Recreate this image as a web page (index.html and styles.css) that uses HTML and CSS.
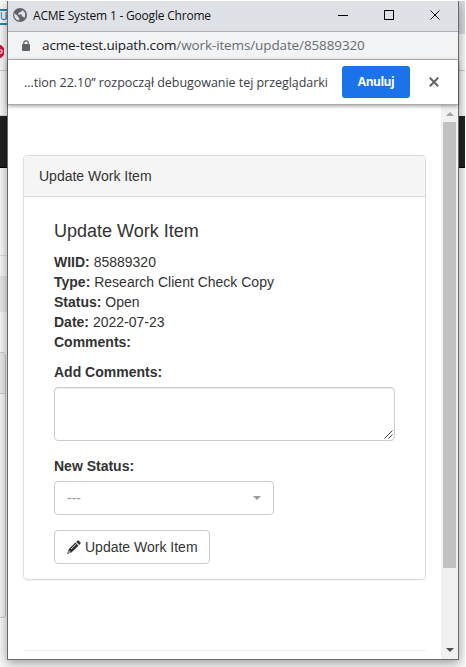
FILE: index.html
```
<!DOCTYPE html>
<html lang="pl">
<head>
<meta charset="utf-8">
<title>ACME System 1</title>
<link rel="stylesheet" href="styles.css">
</head>
<body>
<div class="desktop">
  <div class="behind behind-left">
    <div class="b-top"><span class="ui-logo">Ui</span></div>
    <div class="b-badge"><svg width="5" height="15" viewBox="0 0 5 15"><path d="M0 1h1l3 3v7l-3 3H0z" fill="#d6173c"/><path d="M0 6h2v3H0" fill="none" stroke="#fff"/></svg></div>
    <div class="b-gap"></div>
    <div class="b-nav"></div>
    <div class="b-row"></div>
    <div class="b-alt"></div>
    <div class="b-space"></div>
    <div class="b-panel"><div class="b-panel-head"></div></div>
  </div>
  <div class="behind behind-right">
    <div class="r-tab"></div><div class="r-bar"></div><div class="r-gap"></div><div class="r-nav"></div>
  </div>
  <main class="window">
    <header class="titlebar">
      <svg class="globe" width="14" height="14" viewBox="0 0 14 14"><circle cx="7" cy="7" r="7" fill="#5f6368"/><path d="M1.200 5.200 5 8v1l1.300 1v2.500C3.500 12.300 1.200 10 1.200 7zM8.800 2v.8c0 .7-.5 1.200-1.200 1.200H6.300v1.200H5V6.500h3.800v2h1.200l1.200 1.400c1.800-2.300 1.500-6.300-2.400-7.900z" fill="#dee1e6"/></svg>
      <span class="title">ACME System 1 - Google Chrome</span>
      <svg class="controls" width="104" height="12" viewBox="0 0 104 12" fill="none" stroke="#000" shape-rendering="crispEdges"><path d="M0 6.500h10M46.500 1.500h9v9h-9z"/><path d="M92.500 1.500l9 9m0-9l-9 9" shape-rendering="auto"/></svg>
    </header>
    <div class="address">
      <svg class="lock" width="8" height="11" viewBox="0 0 8 11"><path d="M1.800 5V3a2.200 2.200 0 0 1 4.400 0v2" fill="none" stroke="#5f6368" stroke-width="1.200"/><rect y="4" width="8" height="7" rx="1" fill="#5f6368"/></svg>
      <span class="url"><b>acme-test.uipath.com</b>/work-items/update/85889320</span>
    </div>
    <div class="infobar">
      <span class="info">...tion 22.10” rozpoczął debugowanie tej przeglądarki</span>
      <button class="cancel">Anuluj</button>
      <svg class="close" width="10" height="10" viewBox="0 0 10 10"><path d="M.8.8l8.400 8.400m0-8.400L.8 9.200" stroke="#5f6368" stroke-width="2"/></svg>
    </div>
    <div class="viewport">
      <div class="page">
        <section class="card">
          <div class="card-head">Update Work Item</div>
          <div class="card-body">
            <h4>Update Work Item</h4>
            <div><b>WIID:</b> 85889320</div>
            <div><b>Type:</b> Research Client Check Copy</div>
            <div><b>Status:</b> Open</div>
            <div><b>Date:</b> 2022-07-23</div>
            <div><b>Comments:</b></div>
            <label class="label">Add Comments:</label>
            <div class="textarea"><svg width="9" height="9" viewBox="0 0 9 9"><path d="M.5 8.500l8-8m-4 8l4-4" fill="none" stroke="#444"/></svg></div>
            <label class="label">New Status:</label>
            <div class="select"><span>---</span><i class="caret"></i></div>
            <button class="update"><svg width="14" height="14" viewBox="0 0 14 14"><path d="M10.300.7q.8-.7 1.500 0l1.600 1.600q.6.700 0 1.400l-1.100 1.200L9.200 1.900zM8.400 2.600l3.100 3.100-6.800 6.500L0 14l1.700-4.800z" fill="#333"/><path d="M4 9l5-4.800" stroke="#fff" stroke-width=".8"/><path d="M1.800 10.300l2 2-2.300.700-.6-.5z" fill="#aaa"/></svg><span>Update Work Item</span></button>
          </div>
        </section>
        <hr>
      </div>
      <div class="scroll"><i class="up"></i><div class="thumb"></div><i class="down"></i></div>
    </div>
  </main>
</div>
</body>
</html>
```
FILE: styles.css
```
* { box-sizing: border-box; }
body { margin: 0; background: #fff; font: 14px/20px "Liberation Sans", Arial, sans-serif; color: #333; }
.desktop { position: relative; width: 465px; height: 667px; overflow: hidden; background: #f8f8f8; border-top: 1px solid #fff; }

.behind { position: absolute; top: 0; height: 666px; overflow: hidden; background: #f8f8f8; }
.behind-left { left: 0; width: 30px; }
.behind-right { right: 0; width: 20px; }
.b-top { height: 36px; padding-top: 8px; }
.ui-logo { display: block; width: 14px; height: 16px; border: 2px solid #2188c0; border-left: 0; color: #0d7dbb; font: 10px/12px "Liberation Sans", sans-serif; letter-spacing: -1.500px; }
.b-badge { height: 34px; padding-top: 7px; border-bottom: 1px solid #d0d0d0; }
.b-badge svg { display: block; }
.b-gap { height: 45px; border-bottom: 1px solid #ddd; }
.b-nav { height: 52px; background: #222; border-bottom: 1px solid #080808; }
.b-row { height: 88px; border-bottom: 1px solid #ddd; }
.b-alt { height: 56px; border-top: 20px solid #f8f8f8; background: #e8e8e8; }
.b-space { height: 40px; }
.b-panel { width: 6px; height: 266px; border: 1px solid #ccc; border-left: 0; border-radius: 0 4px 4px 0; background: #f5f5f5; }
.b-panel-head { height: 41px; background: #e9e9e9; border-bottom: 1px solid #ccc; }
.r-tab { height: 33px; background: #d6d9dd; }
.r-bar { height: 37px; border-bottom: 1px solid #c8c8c8; }
.r-gap { height: 45px; }
.r-nav { height: 52px; background: #222; border-bottom: 1px solid #000; }

.window { position: absolute; left: 7px; top: 0; width: 452px; height: 659px; display: flex; flex-direction: column; border: 1px solid #6b6b6b; border-top: 0; background: #fff; box-shadow: 0 3px 10px rgba(0,0,0,.38); }
.titlebar { height: 31px; flex: none; display: flex; align-items: center; padding: 0 16px 2px 5px; background: #dee1e6; border-bottom: 1px solid #adb0b4; }
.title { margin-left: 6px; flex: 1; padding-top: 2px; color: #111; font: 12px/16px "Open Sans", sans-serif; letter-spacing: -.2px; white-space: nowrap; }
.controls { flex: none; }
.address { height: 28px; flex: none; display: flex; align-items: center; padding: 0 0 1px 14px; background: #f1f3f4; border-bottom: 1px solid #b5b7b9; }
.url { margin-left: 12px; color: #6a6d71; font: 13.500px/18px "Open Sans", sans-serif; letter-spacing: -.12px; white-space: nowrap; }
.url b { font-weight: 400; color: #202124; }
.infobar { height: 45px; flex: none; display: flex; align-items: center; padding: 0 19px 0 16px; border-bottom: 1px solid #aaa; box-shadow: 0 1px 4px rgba(0,0,0,.4); z-index: 1; background: #fff; }
.info { width: 318px; padding-top: 1px; font: 12.500px/18px "Open Sans", sans-serif; letter-spacing: -.04px; color: #3c4043; white-space: nowrap; }
.cancel { width: 68px; height: 32px; padding: 0; border: 0; border-radius: 3px; background: #1a73e8; color: #fff; font: bold 12px/18px "Open Sans", sans-serif; letter-spacing: -.5px; }
.close { margin-left: auto; }

.viewport { flex: 1; min-height: 0; display: flex; }
.page { flex: 1; padding: 50px 15px 0; overflow: hidden; }
.card { width: 403px; height: 425px; border: 1px solid #ddd; border-radius: 4px; box-shadow: 0 1px 1px rgba(0,0,0,.05); }
.card-head { height: 41px; padding: 10px 15px; background: #f5f5f5; border-bottom: 1px solid #ddd; border-radius: 3px 3px 0 0; }
.card-body { padding: 24px 30px 15px; }
h4 { margin: 0 0 11px; font-size: 18px; font-weight: 400; line-height: 20px; }
.label { display: block; margin: 10px 0 5px; font-weight: 700; }
.textarea { display: flex; justify-content: flex-end; align-items: flex-end; width: 341px; height: 54px; padding: 1px; border: 1px solid #ccc; border-radius: 4px; box-shadow: inset 0 1px 1px rgba(0,0,0,.075); margin-bottom: 15px; }
.select { width: 220px; height: 34px; display: flex; align-items: center; justify-content: space-between; padding: 0 12px; border: 1px solid #ccc; border-radius: 4px; color: #999; margin-bottom: 15px; }
.caret { border: 4px solid transparent; border-top-color: #999; border-bottom: 0; }
.update { display: flex; align-items: center; gap: 4px; width: 156px; height: 34px; padding: 0 12px; border: 1px solid #ccc; border-radius: 4px; background: #fff; color: #333; font: inherit; white-space: nowrap; }
.update svg { flex: none; }
hr { width: 403px; margin: 70px 0 0; border: 0; border-top: 1px solid #eee; }
.scroll { width: 17px; flex: none; display: flex; flex-direction: column; align-items: center; background: #f1f1f1; padding: 7px 0; }
.up { border: 4px solid transparent; border-bottom-color: #a3a3a3; border-top: 0; }
.thumb { width: 13px; height: 446px; margin-top: 6px; background: #c1c1c1; }
.down { margin-top: auto; border: 4px solid transparent; border-top-color: #505050; border-bottom: 0; }
```
